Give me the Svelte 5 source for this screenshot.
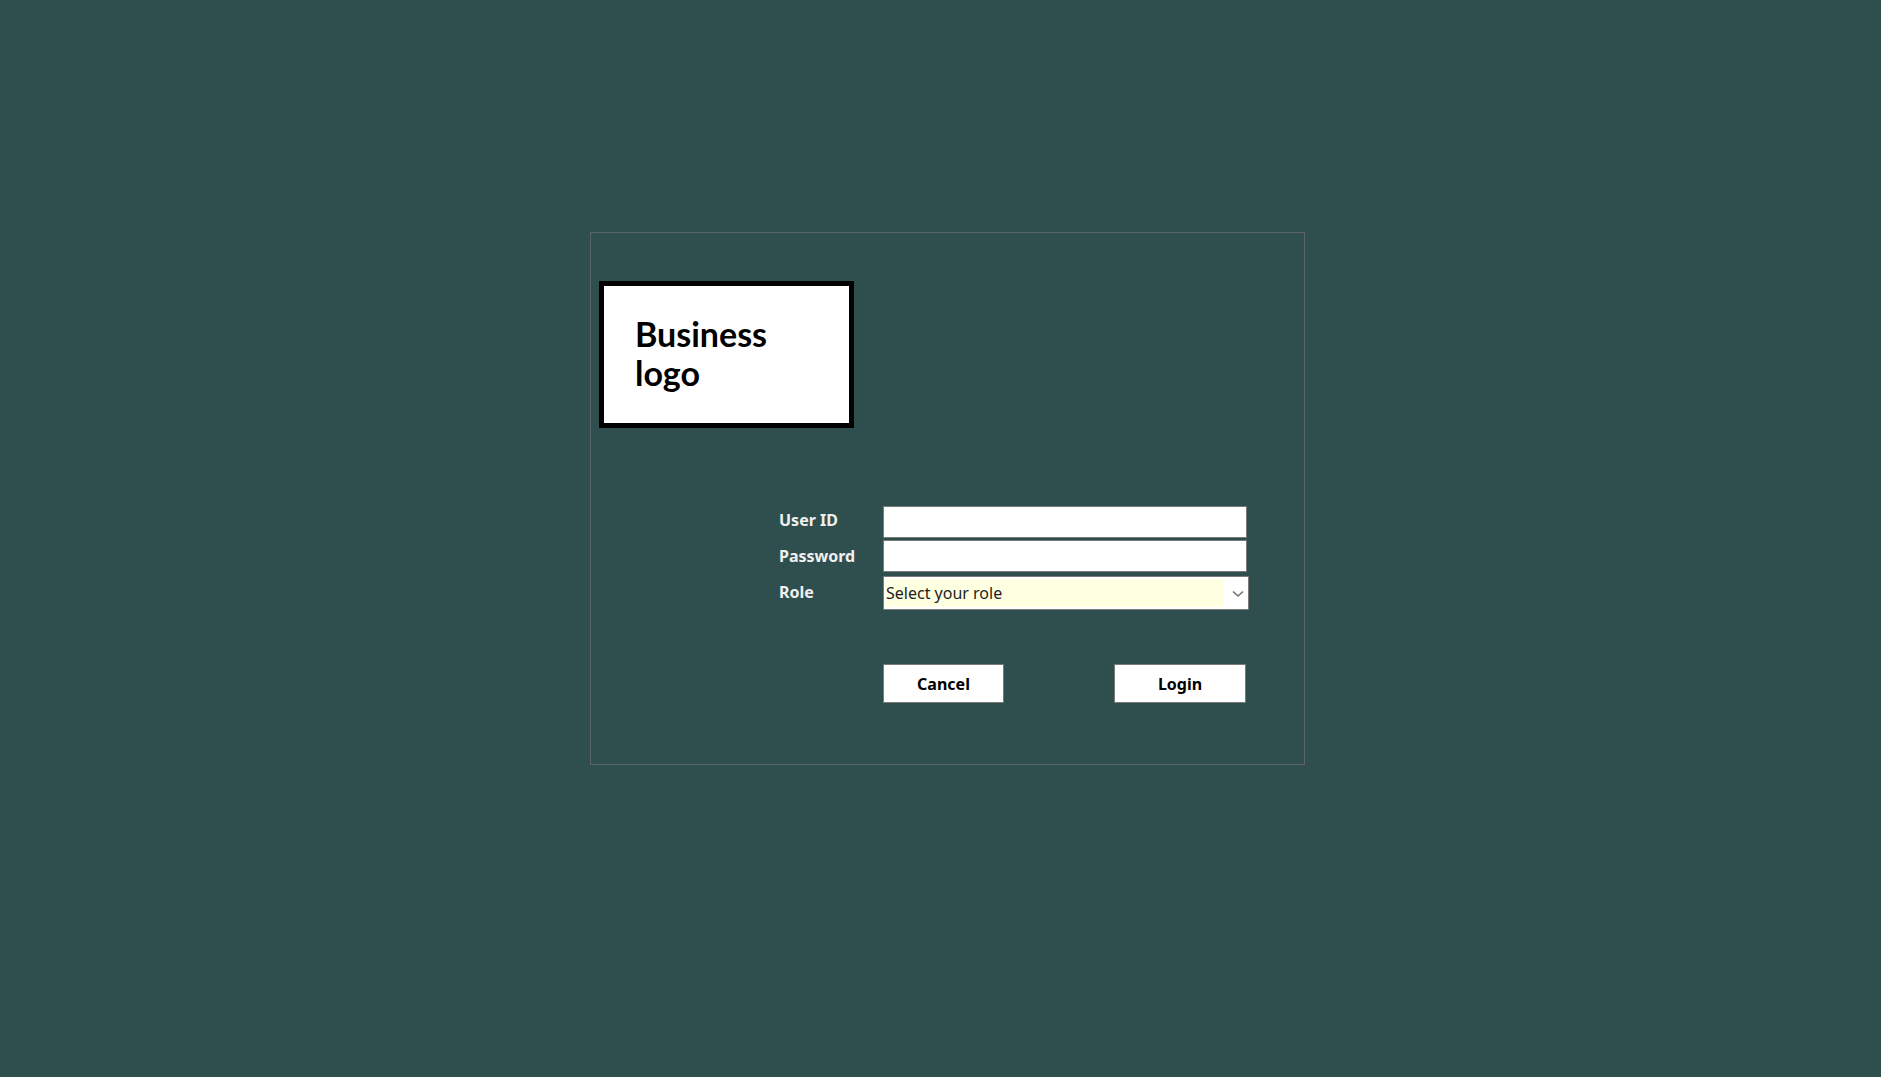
<script>
  let userId = $state('');
  let password = $state('');
  let role = $state('');

  function cancel() {
    userId = '';
    password = '';
    role = '';
  }
</script>

<main>
  <section class="panel">
    <h1 class="logo">Business<br />logo</h1>

    <form onsubmit={(event) => event.preventDefault()}>
      <div class="labels">
        <label for="user-id">User ID</label>
        <label for="password">Password</label>
        <label for="role">Role</label>
      </div>

      <div class="controls">
        <input id="user-id" type="text" bind:value={userId} />
        <input id="password" type="password" bind:value={password} />
        <div class="role">
          <select id="role" bind:value={role}>
            <option value="">Select your role</option>
            <option value="admin">Admin</option>
            <option value="user">User</option>
          </select>
          <svg class="chevron" viewBox="0 0 12 8" aria-hidden="true">
            <path d="M1 1.5 L6 6 L11 1.5" />
          </svg>
        </div>

        <div class="actions">
          <button class="cancel" type="button" onclick={cancel}>Cancel</button>
          <button class="login" type="submit">Login</button>
        </div>
      </div>
    </form>
  </section>
</main>

<style>
  :global(body) {
    margin: 0;
    background: #2f4f4f;
  }

  main {
    box-sizing: border-box;
    display: flex;
    justify-content: center;
    align-items: flex-start;
    min-height: 100vh;
    padding: 232px 0 32px 14px;
    font-family: 'Segoe UI', 'Noto Sans', 'Open Sans', sans-serif;
    font-size: 16px;
    line-height: 24px;
  }

  .panel {
    box-sizing: border-box;
    width: 100%;
    max-width: 715px;
    padding: 48px 55px 61px 8px;
    border: 1px solid #5e6363;
  }

  .logo {
    box-sizing: border-box;
    width: 255px;
    margin: 0;
    padding: 28px 31px 31px;
    border: 5px solid #000;
    background: #fff;
    color: #000;
    font-family: 'Century Gothic', Lato, sans-serif;
    font-size: 34px;
    font-weight: 700;
    line-height: 39px;
  }

  form {
    display: flex;
    margin: 78px 0 0 180px;
  }

  .labels {
    display: flex;
    flex-direction: column;
    gap: 12px;
    flex: 0 0 104px;
    padding-top: 2px;
    color: #f0f0f0;
    font-weight: 700;
  }

  .controls {
    display: flex;
    flex-direction: column;
    flex: 1;
    gap: 2px;
    min-width: 0;
  }

  input,
  select,
  button {
    box-sizing: border-box;
    border: 1px solid #7a7a7a;
    border-radius: 0;
    background: #fff;
    color: #000;
    font: inherit;
  }

  input {
    height: 32px;
    margin-right: 2px;
    padding: 0 3px;
  }

  .role {
    position: relative;
    margin-top: 2px;
  }

  select {
    display: block;
    width: 100%;
    height: 34px;
    padding: 0 26px 0 2px;
    appearance: none;
    background: linear-gradient(#ffffe1, #ffffe1) 2px 2px / calc(100% - 26px) calc(100% - 4px)
      no-repeat #fff;
    color: #1e1e1e;
  }

  .chevron {
    position: absolute;
    top: 14px;
    right: 5px;
    width: 12px;
    height: 8px;
    fill: none;
    stroke: #707070;
    stroke-width: 1.6;
    pointer-events: none;
  }

  .actions {
    display: flex;
    justify-content: space-between;
    margin: 52px 3px 0 0;
  }

  button {
    height: 39px;
    padding: 0;
    font-weight: 700;
  }

  .cancel {
    width: 121px;
  }

  .login {
    width: 132px;
  }
</style>
